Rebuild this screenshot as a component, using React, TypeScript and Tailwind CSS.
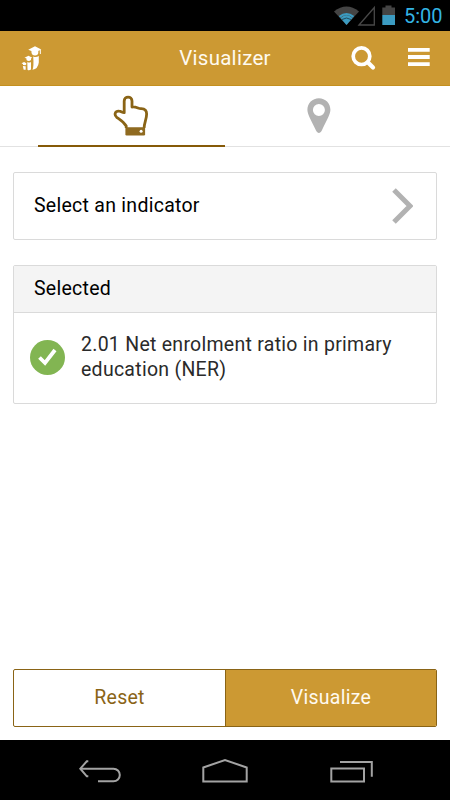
import type React from "react";

export default function App(): React.ReactNode {
  return (
    <div className="w-[450px] h-[800px] flex flex-col bg-white font-[Roboto,sans-serif] text-[19.5px] tracking-[0.27px] text-black overflow-hidden">
      <StatusBar />
      <Header />
      <Tabs />
      <main className="flex-1 flex flex-col px-[13px] pt-[25px] pb-[13px]">
        <button
          type="button"
          className="h-[68px] flex items-center justify-between pl-5 pr-[23px] border border-[#dadada] rounded-[2px] cursor-pointer"
        >
          <span>Select an indicator</span>
          <ChevronIcon />
        </button>
        <section className="mt-[25px] h-[139px] flex flex-col border border-[#dadada] rounded-[2px]">
          <h2 className="h-[47px] flex items-center pl-5 bg-[#f4f4f4] border-b border-[#dadada]">
            Selected
          </h2>
          <div className="flex-1 flex items-center gap-4 pl-4 pb-px">
            <CheckIcon />
            <p className="w-[330px] pb-px leading-[25px] text-[#2a2a2a]">
              2.01 Net enrolment ratio in primary education (NER)
            </p>
          </div>
        </section>
        <div className="mt-auto h-[58px] flex border border-[#8a6416] rounded-[2px] overflow-hidden">
          <button
            type="button"
            className="w-[211px] pb-px text-[#8a6416] cursor-pointer"
          >
            Reset
          </button>
          <button
            type="button"
            className="flex-1 pb-px bg-[#cc9933] text-[#fffaf0] border-l border-[#8a6416] cursor-pointer"
          >
            Visualize
          </button>
        </div>
      </main>
      <NavigationBar />
    </div>
  );
}

function StatusBar(): React.ReactNode {
  return (
    <div className="h-[31px] shrink-0 flex items-center justify-end bg-black pr-2">
      <svg width="64" height="31" viewBox="333 0 64 31">
        <path d="M334 11.5Q346.500 1.500 359 11.500L346.500 25Z" fill="#444" />
        <path d="M340.500 18Q346.500 12.500 352.500 18L346.500 25Z" fill="#3b9bc1" />
        <path
          d="M339.500 16.800Q346.500 11.500 353.500 16.800"
          fill="none"
          stroke="#3b9bc1"
          strokeWidth="2.200"
        />
        <path
          d="M342 19.500Q346.500 16.500 351 19.500"
          fill="none"
          stroke="#1b3540"
          strokeWidth="0.800"
        />
        <path d="M359 25L374.300 7.500V25Z" fill="none" stroke="#484848" strokeWidth="1.300" />
        <path d="M382.300 7.500H385.500V5.500H391.500V7.500H395V15H382.300Z" fill="#444" />
        <path d="M382.300 15H395V25H382.300Z" fill="#3b9bc1" />
      </svg>
      <span className="w-[45px] pl-[7px] text-[20px] tracking-normal leading-none text-[#33b5e5] whitespace-nowrap">
        5:00
      </span>
    </div>
  );
}

function Header(): React.ReactNode {
  return (
    <header className="h-[55px] shrink-0 grid grid-cols-[1fr_auto_1fr] items-center bg-[#cc9933] border-b border-[#c4901f] px-5">
      <svg width="24" height="28" viewBox="20 43.500 24 28" fill="#fff">
        <path d="M28.300 49.300L35 45.700L41.300 49L35 52Z" />
        <path d="M31.500 50H38.300V52.500Q38 54.900 35 54.900Q31.800 54.900 31.500 52Z" />
        <path d="M39.700 49.500L40.800 49.300V53.500H39.900Z" />
        <path d="M33.200 55.900Q36 57.400 38.800 55.400V62Q38 68.500 32.500 69.300Q34 65.500 33.200 55.900Z" />
        <path d="M24.500 57.300L28.500 55.200L32.300 57.300L31 58.100V59.500Q28.700 61.500 26.500 59.500V58.100Z" />
        <path d="M27.300 61.500Q29 62.500 31 61.500V69Q29 70.500 27.500 69.300Z" />
        <path d="M21.500 62.700L24.100 61.400L26.300 62.700V63.700L25.300 64.700L23 64.500V63.500Z" />
        <path d="M22.800 65.600L25.700 65.700V69.300H23.700Z" />
      </svg>
      <h1 className="text-[20.5px] text-[#fffaf0]">Visualizer</h1>
      <div className="flex items-center justify-end">
        <svg width="80" height="28" viewBox="350 44.500 80 28" fill="none" stroke="#fff">
          <circle cx="361.500" cy="56.700" r="8.300" strokeWidth="3.700" />
          <path d="M368 63L373 68" strokeWidth="4.200" strokeLinecap="round" />
          <path d="M408 50.300H429.700M408 57.500H429.700M408 64.700H429.700" strokeWidth="3.800" />
        </svg>
      </div>
    </header>
  );
}

function Tabs(): React.ReactNode {
  return (
    <nav className="h-[61px] shrink-0 flex border-b border-[#e2e2e2] px-[37.500px]">
      <button
        type="button"
        aria-label="Indicator"
        className="w-[187.500px] -mb-px flex justify-center pt-[9px] border-b-2 border-[#865a08] cursor-pointer"
      >
        <svg width="36" height="42" viewBox="113.300 95 36 42">
          <path
            d="M126.500 128V126C124 121.500 120 119.500 117 117.300C114 114.500 115.500 110.800 119.500 111.200C121.500 111.300 123 113 124.500 112.700V101C124.500 95.900 132.300 95.900 132.300 101V107C137 106.500 139 109 141.500 108.600C145.500 108.700 147 111 146.900 114C147 119 144.400 123 144.400 128"
            fill="#fff"
            stroke="#8a6416"
            strokeWidth="2.800"
            strokeLinejoin="round"
          />
          <rect x="125.700" y="127.200" width="19.700" height="8.300" rx="1.200" fill="#8f6a20" />
          <circle cx="141.400" cy="131.300" r="1.500" fill="#fff" />
        </svg>
      </button>
      <button
        type="button"
        aria-label="Location"
        className="w-[187.500px] flex justify-center pt-3 cursor-pointer"
      >
        <svg width="24" height="36" viewBox="306.800 98 24 36">
          <path
            d="M318.700 98.300C312.200 98.300 307.200 103.400 307.200 109.800C307.200 114 310 118.500 315.800 130.500C317.300 133.700 320.100 133.700 321.600 130.500C327.400 118.500 330.200 114 330.200 109.800C330.200 103.400 325.200 98.300 318.700 98.300ZM318.700 104A6 6 0 1 1 318.700 116A6 6 0 1 1 318.700 104Z"
            fill="#b2b2b2"
            fillRule="evenodd"
          />
        </svg>
      </button>
    </nav>
  );
}

function ChevronIcon(): React.ReactNode {
  return (
    <svg width="21" height="36" viewBox="392 188 21 36" fill="none">
      <path d="M394 190L410 206L394 222" stroke="#b2b2b2" strokeWidth="5" />
    </svg>
  );
}

function CheckIcon(): React.ReactNode {
  return (
    <svg width="35" height="35" viewBox="30 340 35 35" className="shrink-0">
      <circle cx="47.500" cy="357.500" r="17.500" fill="#82b552" />
      <path
        d="M39.500 357.500L45 363L55 350"
        fill="none"
        stroke="#fff"
        strokeWidth="3.800"
      />
    </svg>
  );
}

function NavigationBar(): React.ReactNode {
  return (
    <footer className="h-[60px] shrink-0 flex items-center justify-between bg-black pl-[77px] pr-[75px] pt-0.5">
      <svg width="46" height="28" viewBox="77 757 46 28" fill="none" stroke="#a3a3a3" strokeWidth="2">
        <path d="M81 768.700H113.500A6.200 6.200 0 0 1 113.500 781.300H98" />
        <path d="M88.300 761.300H86.800L80.300 768.700L86.800 776.300H88.300" />
      </svg>
      <svg width="48" height="28" viewBox="202 757 48 28" fill="none" stroke="#a3a3a3" strokeWidth="2">
        <path d="M203.300 767.500L225 760L246.700 767.500V781.500H203.300Z" />
      </svg>
      <svg width="46" height="28" viewBox="329 757 46 28" fill="none" stroke="#a3a3a3" strokeWidth="2">
        <path d="M331.300 768.500H364V781.500H331.300Z" />
        <path d="M340 762H371.800V776.800" />
      </svg>
    </footer>
  );
}
